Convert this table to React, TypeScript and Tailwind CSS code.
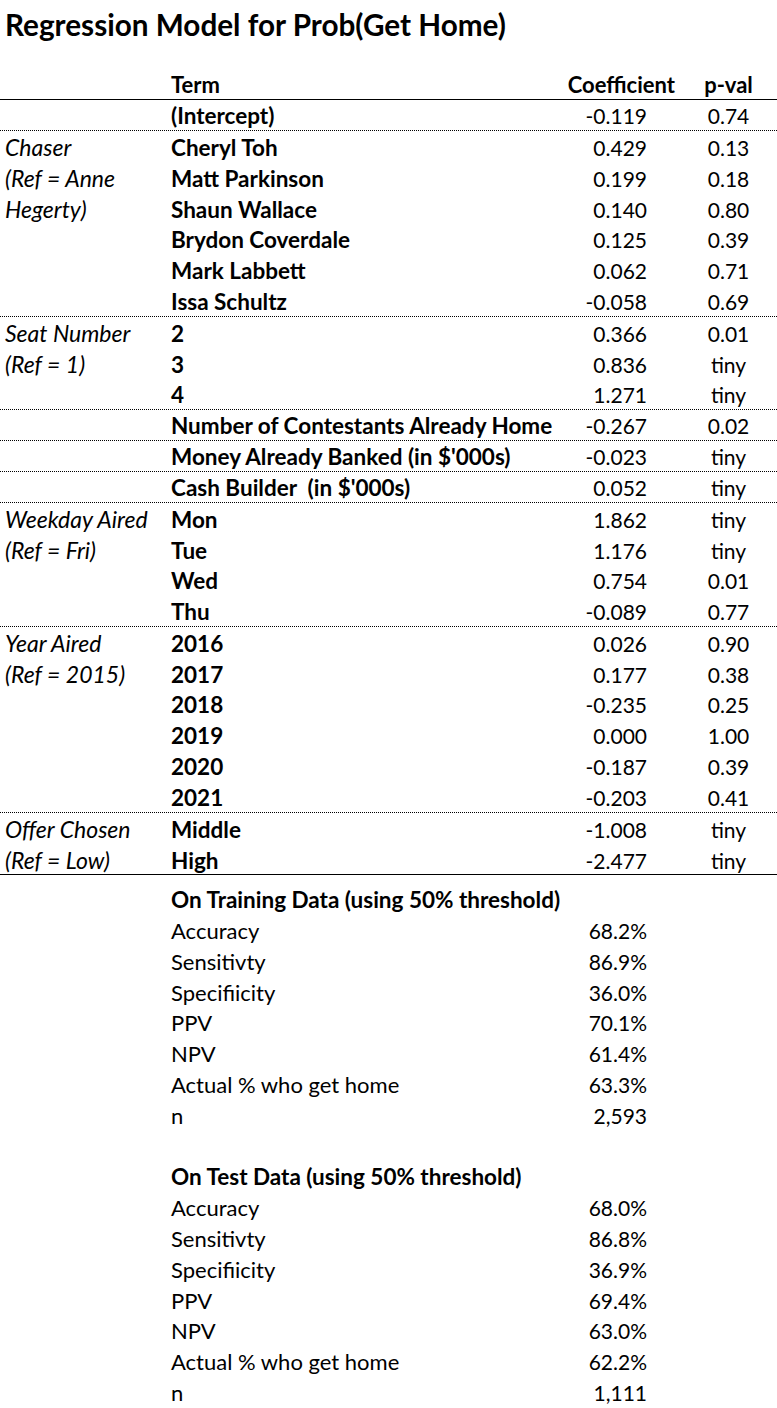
import React from "react";

type Row = {
  label?: string;
  term: string;
  coef?: string;
  p?: string;
  bold?: boolean;
  line?: "dotted" | "solid";
  tall?: boolean;
  stat?: boolean;
};

const model: Row[] = [
  { term: "(Intercept)", coef: "-0.119", p: "0.74", bold: true, line: "dotted" },
  { label: "Chaser", term: "Cheryl Toh", coef: "0.429", p: "0.13", bold: true },
  { label: "(Ref = Anne", term: "Matt Parkinson", coef: "0.199", p: "0.18", bold: true },
  { label: "Hegerty)", term: "Shaun Wallace", coef: "0.140", p: "0.80", bold: true },
  { term: "Brydon Coverdale", coef: "0.125", p: "0.39", bold: true },
  { term: "Mark Labbett", coef: "0.062", p: "0.71", bold: true },
  { term: "Issa Schultz", coef: "-0.058", p: "0.69", bold: true, line: "dotted" },
  { label: "Seat Number", term: "2", coef: "0.366", p: "0.01", bold: true },
  { label: "(Ref = 1)", term: "3", coef: "0.836", p: "tiny", bold: true },
  { term: "4", coef: "1.271", p: "tiny", bold: true, line: "dotted" },
  { term: "Number of Contestants Already Home", coef: "-0.267", p: "0.02", bold: true, line: "dotted" },
  { term: "Money Already Banked (in $'000s)", coef: "-0.023", p: "tiny", bold: true, line: "dotted" },
  { term: "Cash Builder\u00a0 (in $'000s)", coef: "0.052", p: "tiny", bold: true, line: "dotted" },
  { label: "Weekday Aired", term: "Mon", coef: "1.862", p: "tiny", bold: true },
  { label: "(Ref = Fri)", term: "Tue", coef: "1.176", p: "tiny", bold: true },
  { term: "Wed", coef: "0.754", p: "0.01", bold: true },
  { term: "Thu", coef: "-0.089", p: "0.77", bold: true, line: "dotted" },
  { label: "Year Aired", term: "2016", coef: "0.026", p: "0.90", bold: true },
  { label: "(Ref = 2015)", term: "2017", coef: "0.177", p: "0.38", bold: true },
  { term: "2018", coef: "-0.235", p: "0.25", bold: true },
  { term: "2019", coef: "0.000", p: "1.00", bold: true },
  { term: "2020", coef: "-0.187", p: "0.39", bold: true },
  { term: "2021", coef: "-0.203", p: "0.41", bold: true, line: "dotted" },
  { label: "Offer Chosen", term: "Middle", coef: "-1.008", p: "tiny", bold: true },
  { label: "(Ref = Low)", term: "High", coef: "-2.477", p: "tiny", bold: true, line: "solid" },
];

const stats = (title: string, v: string[], tall: boolean): Row[] => [
  { term: title, bold: true, tall, stat: true },
  { term: "Accuracy", coef: v[0], stat: true },
  { term: "Sensitivty", coef: v[1], stat: true },
  { term: "Specifiicity", coef: v[2], stat: true },
  { term: "PPV", coef: v[3], stat: true },
  { term: "NPV", coef: v[4], stat: true },
  { term: "Actual % who get home", coef: v[5], stat: true },
  { term: "n", coef: v[6], stat: true },
];

const rows: Row[] = [
  ...model,
  ...stats("On Training Data (using 50% threshold)", ["68.2%", "86.9%", "36.0%", "70.1%", "61.4%", "63.3%", "2,593"], true),
  { term: "", stat: true },
  ...stats("On Test Data (using 50% threshold)", ["68.0%", "86.8%", "36.9%", "69.4%", "63.0%", "62.2%", "1,111"], false),
];

function TableRow({ row }: { row: Row }) {
  const border =
    row.line === "dotted"
      ? "border-b border-dotted border-black"
      : row.line === "solid"
      ? "border-b border-black"
      : "";
  const height = row.tall ? "h-[41px] pt-[14px]" : row.stat ? "h-[30.8px] pt-[4px]" : "h-[31px] pt-[5px]";
  return (
    <div className={`grid grid-cols-[166px_394px_120px_97px] items-baseline ${height} ${border}`}>
      <div className="pl-[5px] italic text-[23px] whitespace-nowrap">{row.label}</div>
      <div className={`pl-[5px] whitespace-nowrap ${row.bold ? "font-bold text-[22.5px]" : ""}`}>
        {row.term}
      </div>
      <div className="pr-[33px] text-right text-[21px] whitespace-nowrap">{row.coef}</div>
      <div className="text-center text-[21px] whitespace-nowrap">{row.p}</div>
    </div>
  );
}

export default function App() {
  return (
    <div className="w-[777px] h-[1408px] bg-white text-black font-['Lato',sans-serif] text-[22px] leading-none overflow-hidden">
      <div className="h-[49px] flex items-center pl-[5px] text-[29.7px] font-bold">
        Regression Model for Prob(Get Home)
      </div>
      <div className="h-[20px]" />
      <div className="grid grid-cols-[166px_394px_120px_97px] h-[31px] pt-[5px] items-baseline border-b border-black font-bold">
        <div />
        <div className="pl-[5px]">Term</div>
        <div className="pr-[5px] text-right">Coefficient</div>
        <div className="text-center">p-val</div>
      </div>
      {rows.map((r, i) => (
        <TableRow key={i} row={r} />
      ))}
    </div>
  );
}
